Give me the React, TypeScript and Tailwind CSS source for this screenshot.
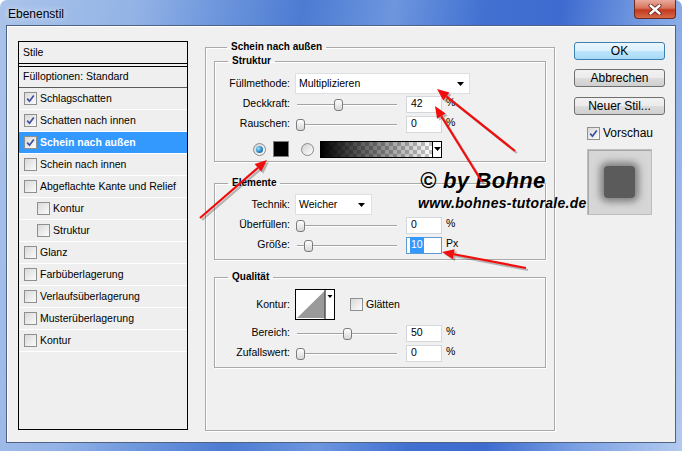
import React from 'react'

type StyleRow = { label: string; checked?: boolean; active?: boolean; sub?: boolean }

const styleRows: StyleRow[] = [
  { label: 'Schlagschatten', checked: true },
  { label: 'Schatten nach innen', checked: true },
  { label: 'Schein nach außen', checked: true, active: true },
  { label: 'Schein nach innen' },
  { label: 'Abgeflachte Kante und Relief' },
  { label: 'Kontur', sub: true },
  { label: 'Struktur', sub: true },
  { label: 'Glanz' },
  { label: 'Farbüberlagerung' },
  { label: 'Verlaufsüberlagerung' },
  { label: 'Musterüberlagerung' },
  { label: 'Kontur' },
]

function Check({ checked }: { checked?: boolean }) {
  return (
    <span className="flex h-[13px] w-[13px] shrink-0 items-center justify-center border border-[#8e8f8f] bg-[linear-gradient(135deg,#d9d9d9,#fbfbfb)]">
      {checked && (
        <svg viewBox="0 0 9 9" className="h-[9px] w-[9px]">
          <path d="M1.2 4.6 L3.5 7.2 L7.8 1.4" stroke="#3d4f9e" strokeWidth="1.7" fill="none" />
        </svg>
      )}
    </span>
  )
}

function Radio({ on }: { on?: boolean }) {
  return (
    <span className="flex h-[13px] w-[13px] shrink-0 items-center justify-center rounded-full border border-[#8a8a8a] bg-[linear-gradient(135deg,#cfcfcf,#ffffff)]">
      {on && (
        <span className="h-[7px] w-[7px] rounded-full bg-[radial-gradient(circle_at_35%_35%,#9fe0fb,#1e7fc0_60%,#0c4f86)]" />
      )}
    </span>
  )
}

function DropArrow() {
  return (
    <svg viewBox="0 0 7 4" className="h-[4px] w-[7px]">
      <path d="M0 0 H7 L3.5 4 Z" fill="#000" />
    </svg>
  )
}

function Slider({ pos }: { pos: number }) {
  return (
    <div className="relative h-[20px] w-[106px] shrink-0">
      <div className="absolute left-[2px] top-[10px] h-[2px] w-[100px] border-t border-[#a3a3a3] border-b border-b-white" />
      <div
        className="absolute top-[5px] h-[12px] w-[9px] rounded-[3px] border border-[#7c7c7c] bg-[linear-gradient(#ffffff,#d6d6d6)]"
        style={{ left: pos }}
      />
    </div>
  )
}

function NumBox({ value, selected }: { value: string; selected?: boolean }) {
  return (
    <div
      className={`ml-[5px] flex h-[17px] w-[36px] shrink-0 items-center border bg-white pl-[3px] ${
        selected ? 'border-[#5e9bd3]' : 'border-[#d4d8dc]'
      }`}
    >
      <span className={selected ? 'bg-[#3399ff] px-[1px] text-white' : 'px-[1px]'}>{value}</span>
    </div>
  )
}

function Label({ children }: { children: React.ReactNode }) {
  return <div className="w-[75px] shrink-0 text-right">{children}</div>
}

function SliderRow({ label, pos, value, unit, selected }: { label: string; pos: number; value: string; unit: string; selected?: boolean }) {
  return (
    <div className="flex h-[20px] items-center">
      <Label>{label}</Label>
      <div className="ml-[5px] flex items-center">
        <Slider pos={pos} />
        <NumBox value={value} selected={selected} />
        <span className="ml-[4px] -mt-[2px]">{unit}</span>
      </div>
    </div>
  )
}

function Group({ title, className, children }: { title: string; className?: string; children: React.ReactNode }) {
  return (
    <fieldset className={`border border-[#a9a9a9] shadow-[1px_1px_0_#fff,inset_1px_1px_0_#fff] ${className ?? ''}`}>
      <legend className="ml-[13px] px-[4px] text-[10px] font-bold leading-[14px]">{title}</legend>
      {children}
    </fieldset>
  )
}

function VistaButton({ children, primary }: { children: React.ReactNode; primary?: boolean }) {
  return (
    <div
      className={`flex h-[18px] w-[91px] items-center justify-center rounded-[3px] border text-[12px] ${
        primary
          ? 'border-[#3c7fb1] bg-[linear-gradient(#eaf6fd_0%,#d9f0fc_50%,#bee6fd_51%,#a7d9f5_100%)]'
          : 'border-[#707070] bg-[linear-gradient(#f2f2f2_0%,#ebebeb_50%,#dddddd_51%,#cfcfcf_100%)]'
      }`}
    >
      {children}
    </div>
  )
}

function Arrow({ x1, y1, x2, y2, color }: { x1: number; y1: number; x2: number; y2: number; color: string }) {
  const a = Math.atan2(y2 - y1, x2 - x1)
  const len = 12
  const w = 5
  const bx = x2 - len * Math.cos(a)
  const by = y2 - len * Math.sin(a)
  const p1 = `${bx + w * Math.sin(a)},${by - w * Math.cos(a)}`
  const p2 = `${bx - w * Math.sin(a)},${by + w * Math.cos(a)}`
  return (
    <g>
      <line x1={x1} y1={y1} x2={bx} y2={by} stroke={color} strokeWidth="2.2" />
      <polygon points={`${x2},${y2} ${p1} ${p2}`} fill={color} />
    </g>
  )
}

const arrows = [
  { x1: 515, y1: 151, x2: 437, y2: 89 },
  { x1: 482, y1: 182, x2: 435, y2: 106 },
  { x1: 200, y1: 218, x2: 267, y2: 160 },
  { x1: 526, y1: 268, x2: 442, y2: 252 },
]

export default function App() {
  return (
    <div className="relative h-[451px] w-[682px] overflow-hidden rounded-t-[7px] bg-[linear-gradient(100deg,#aac3ea_0%,#93b3e6_18%,#7098dd_28%,#4c7bd2_40%,#6d96de_52%,#4170d1_64%,#3e6bcf_74%,#7aa0e3_86%,#b4cbef_100%)] font-['Liberation_Sans',Arial,sans-serif] text-[10.5px] text-black">
      {/* title bar */}
      <div className="flex h-[25px] items-center pl-[8px] pt-[2px] text-[12px] [text-shadow:0_0_6px_#ffffff]">
        Ebenenstil
      </div>
      <div className="absolute right-[6px] top-0 flex h-[19px] w-[42px] items-center justify-center rounded-b-[4px] border border-t-0 border-[#6e2a20] bg-[linear-gradient(#e9ab9b_0%,#d7735b_45%,#c2391f_55%,#d56a48_100%)]">
        <svg viewBox="0 0 14 11" className="h-[11px] w-[14px]">
          <path d="M2.5 1.5 L11.5 9.5 M11.5 1.5 L2.5 9.5" stroke="#5a1a12" strokeWidth="4" strokeLinecap="round" />
          <path d="M2.5 1.5 L11.5 9.5 M11.5 1.5 L2.5 9.5" stroke="#ffffff" strokeWidth="2.4" strokeLinecap="round" />
        </svg>
      </div>

      {/* client area */}
      <div className="mx-[6px] flex h-[418px] items-start border border-[#4e6284] bg-[#f0f0f0] pl-[11px] pt-[14px] shadow-[inset_1px_1px_0_#ffffff]">
        {/* styles list */}
        <div className="mt-[1px] flex h-[389px] w-[170px] shrink-0 flex-col border border-black bg-[#efefef]">
          <div className="flex h-[22px] items-center border-b border-black pl-[4px]">Stile</div>
          <div className="mt-[2px] flex h-[22px] items-center border-t border-b border-t-black border-b-[#5a5a5a] pl-[4px]">
            Fülloptionen: Standard
          </div>
          {styleRows.map((row, i) => (
            <div
              key={i}
              className={`flex h-[22px] items-center gap-[3px] border-b border-white ${row.sub ? 'pl-[18px]' : 'pl-[5px]'} ${
                row.active ? 'bg-[#3399ff] font-bold text-white' : ''
              }`}
            >
              <Check checked={row.checked} />
              <span>{row.label}</span>
            </div>
          ))}
        </div>

        {/* main settings */}
        <Group title="Schein nach außen" className="ml-[17px] h-[391px] w-[348px] shrink-0 px-[8px]">
          <Group title="Struktur" className="w-[332px] pb-[2px]">
            <div className="mt-[5px] flex h-[21px] items-center">
              <Label>Füllmethode:</Label>
              <div className="ml-[5px] flex h-[21px] w-[175px] items-center justify-between border border-[#dcdfe3] bg-white pl-[3px] pr-[5px]">
                <span>Multiplizieren</span>
                <DropArrow />
              </div>
            </div>
            <SliderRow label="Deckkraft:" pos={39} value="42" unit="%" />
            <SliderRow label="Rauschen:" pos={1} value="0" unit="%" />
            <div className="mt-[5px] flex h-[20px] items-center pl-[38px]">
              <Radio on />
              <div className="ml-[7px] h-[16px] w-[16px] border border-[#7d7d7d] bg-black" />
              <div className="ml-[12px]">
                <Radio />
              </div>
              <div className="ml-[6px] flex h-[17px] w-[122px] border border-black">
                <div className="flex-1 [background:linear-gradient(to_right,#000000,rgba(0,0,0,0)),repeating-conic-gradient(#c4c4c4_0%_25%,#ffffff_0%_50%)_0_0/8px_8px]" />
                <div className="flex w-[9px] items-center justify-center border-l border-black bg-white">
                  <DropArrow />
                </div>
              </div>
            </div>
          </Group>

          <Group title="Elemente" className="mt-[14px] w-[332px] pb-[4px]">
            <div className="mt-[4px] flex h-[21px] items-center">
              <Label>Technik:</Label>
              <div className="ml-[5px] flex h-[21px] w-[77px] items-center justify-between border border-[#dcdfe3] bg-white pl-[3px] pr-[6px]">
                <span>Weicher</span>
                <DropArrow />
              </div>
            </div>
            <SliderRow label="Überfüllen:" pos={1} value="0" unit="%" />
            <SliderRow label="Größe:" pos={9} value="10" unit="Px" selected />
          </Group>

          <Group title="Qualität" className="mt-[10px] w-[332px] pb-[4px]">
            <div className="mt-[5px] flex h-[31px] items-center">
              <Label>Kontur:</Label>
              <svg viewBox="0 0 40 31" className="ml-[5px] h-[31px] w-[40px]">
                <rect x="0.5" y="0.5" width="39" height="30" fill="#ffffff" stroke="#000" />
                <polygon points="2,29 29.5,2 29.5,29" fill="#9a9a9a" />
                <line x1="30" y1="0" x2="30" y2="31" stroke="#000" />
                <path d="M32.5 6 H37.5 L35 9 Z" fill="#000" />
              </svg>
              <div className="ml-[15px] flex items-center gap-[3px]">
                <Check />
                <span>Glätten</span>
              </div>
            </div>
            <div className="mt-[3px]">
              <SliderRow label="Bereich:" pos={48} value="50" unit="%" />
              <SliderRow label="Zufallswert:" pos={1} value="0" unit="%" />
            </div>
          </Group>
        </Group>

        {/* buttons */}
        <div className="ml-[19px] mt-[2px] flex w-[91px] shrink-0 flex-col">
          <VistaButton primary>OK</VistaButton>
          <div className="mt-[9px]">
            <VistaButton>Abbrechen</VistaButton>
          </div>
          <div className="mt-[10px]">
            <VistaButton>Neuer Stil...</VistaButton>
          </div>
          <div className="ml-[13px] mt-[9px] flex items-center gap-[3px] text-[12px]">
            <Check checked />
            <span>Vorschau</span>
          </div>
          <div className="ml-[13px] mt-[7px] flex h-[66px] w-[65px] items-center justify-center border border-[#bdbdbd] bg-[#d6d6d6] shadow-[inset_1px_1px_0_#a8a8a8]">
            <div className="h-[32px] w-[31px] rounded-[4px] bg-[#5b5b5b] shadow-[0_0_7px_4px_rgba(60,60,60,0.55)]" />
          </div>
        </div>
      </div>

      {/* watermark */}
      <div className="pointer-events-none absolute left-[420px] top-[166px] flex flex-col font-['Liberation_Sans',Arial,sans-serif] font-bold italic">
        <span className="text-[22px] leading-[30px] tracking-[0.3px]">© by Bohne</span>
        <span className="-ml-[2px] text-[14px] leading-[14px] tracking-[0.3px]">www.bohnes-tutorale.de</span>
      </div>

      {/* red arrows */}
      <svg className="pointer-events-none absolute left-0 top-0" width="682" height="451" viewBox="0 0 682 451">
        <g transform="translate(2 2)" opacity="0.25">
          {arrows.map((a, i) => (
            <Arrow key={i} {...a} color="#000" />
          ))}
        </g>
        {arrows.map((a, i) => (
          <Arrow key={i} {...a} color="#f20d0d" />
        ))}
      </svg>
    </div>
  )
}
